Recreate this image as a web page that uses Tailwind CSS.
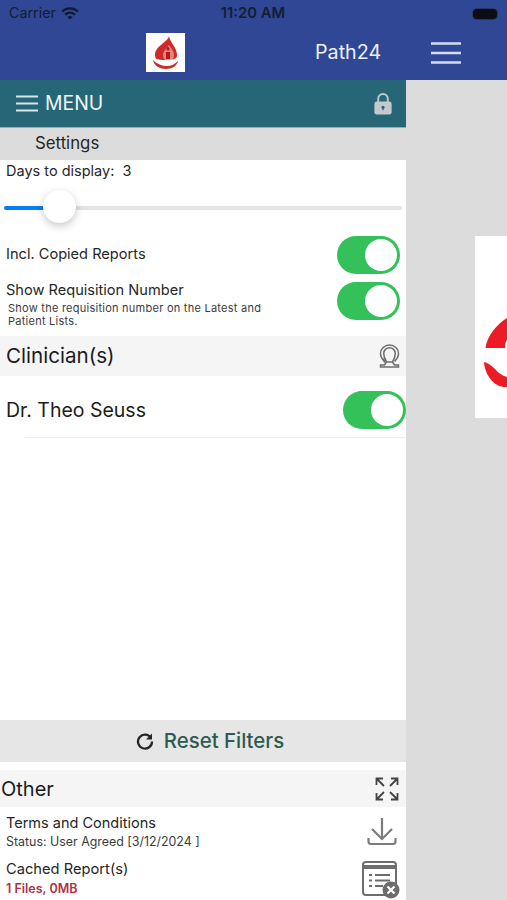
<!DOCTYPE html>
<html lang="en">
<head>
<meta charset="utf-8">
<script src="https://cdn.jsdelivr.net/npm/@tailwindcss/browser@4"></script>
<title>Path24</title>
</head>
<body class="m-0">
<div class="w-[507px] h-[900px] overflow-hidden flex flex-col bg-[#dcdcdc] font-['Inter','Liberation_Sans',sans-serif] text-[#262626]">
  <!-- top bar -->
  <header class="h-[80px] shrink-0 bg-[#2f4795] flex flex-col">
    <div class="h-[27px] shrink-0 grid grid-cols-3 items-center pl-[9px] pr-[10px] text-[#141d33]">
      <div class="flex items-center gap-[5px] text-[14.3px] leading-none">
        <span>Carrier</span>
        <svg width="18" height="13" viewBox="0 0 18 13" fill="none" stroke="#111a30" stroke-width="2.2"><path d="M1 4.500C5.800.4 12.200.4 17 4.500"/><path d="M4 7.600c3-2.500 7-2.500 10 0"/><path d="M9 12.600 6.400 10c1.500-1.200 3.700-1.200 5.200 0z" fill="#111a30" stroke="none"/></svg>
      </div>
      <div class="text-center text-[14.8px] font-semibold leading-none whitespace-nowrap">11:20 AM</div>
      <div class="flex justify-end items-center">
        <div class="w-[24px] h-[10px] rounded-[4px] bg-[#0b0d16] ring-1 ring-[#26376e]"></div>
      </div>
    </div>
    <div class="flex-1 flex items-center pb-[2px]">
      <div class="ml-[146px] w-[39px] h-[39px] bg-white flex items-center justify-center">
        <svg width="33" height="37" viewBox="0 0 33 37">
          <path d="M20 2C19 8 6 12 6 21c0 6 5 9 11 9s11-3 11-9C28 13 21 9 20 2z" fill="#cf2a27"/>
          <path d="M20 11c-2 3-6 6-6 10 0 2 1 4 2 5h7c1-1 2-3 2-5 0-4-3-7-5-10z" fill="#e9837b"/>
          <path d="M19 13c1 0 1.500 1 1.500 2s-.5 1.500-1.500 1.500-1.500-.5-1.500-1.500.5-2 1.500-2zM17 18h4v7h-4z" fill="#a81f1c"/>
          <path d="M3 23c4 2 7 3 11 3h6c3 0 6-1 10-4-2 6-6 8-10 8h-7c-4 0-8-2-10-7z" fill="#fff"/>
          <path d="M4 26c1 6 7 9 13 9 6 0 11-3 12-8-3 3-7 5-11 5-5 0-10-2-14-6z" fill="#c9302a"/>
        </svg>
      </div>
      <span class="ml-[130px] text-[19.700px] text-[#eef1fa]">Path24</span>
      <svg class="ml-[50px]" width="30" height="22" viewBox="0 0 30 22" stroke="#d5dcf0" stroke-width="2.600"><path d="M0 1.500h30M0 11h30M0 20.500h30"/></svg>
    </div>
  </header>

  <div class="flex-1 flex min-h-0">
    <!-- sidebar -->
    <aside class="w-[406px] shrink-0 flex flex-col bg-white">
      <div class="h-[48px] shrink-0 bg-[#266676] border-b border-[#8fb0b8] flex items-center pl-[16px] pr-[14px] text-[#eef6f7]">
        <svg width="22" height="17" viewBox="0 0 22 17" stroke="#d6e6e9" stroke-width="1.800"><path d="M0 1.500h22M0 8.500h22M0 15.500h22"/></svg>
        <span class="ml-[7px] text-[19.400px] flex-1">MENU</span>
        <svg width="18" height="23" viewBox="0 0 18 24"><path d="M4 11V7a5 5 0 0 1 10 0v4" fill="none" stroke="#c3c9cc" stroke-width="2"/><rect y="10" width="18" height="13.500" rx="2.500" fill="#c3c9cc"/><circle cx="9" cy="16" r="1.600" fill="#266676"/><path d="M8.300 16h1.400v3H8.300z" fill="#266676"/></svg>
      </div>
      <div class="h-[32px] shrink-0 bg-[#dcdcdc] pl-[35px] flex items-center text-[16.800px]">Settings</div>

      <div class="h-[22px] shrink-0 pl-[6px] flex items-center text-[14.500px] whitespace-pre">Days to display:  3</div>
      <div class="h-[52px] shrink-0 relative flex items-center px-[4px]">
        <div class="w-full h-[4px] rounded-full bg-[#e3e3e3]"></div>
        <div class="absolute left-[4px] top-[24px] w-[40px] h-[4px] rounded-l-full bg-[#0a7cf5]"></div>
        <div class="absolute left-[43px] top-[8px] w-[33px] h-[33px] rounded-full bg-white shadow-[0_3px_8px_rgba(0,0,0,0.22)]"></div>
      </div>

      <div class="h-[46px] shrink-0 flex justify-between pl-[6px] pr-[6px] text-[14.600px]">
        <span class="mt-[10px] leading-[20px]">Incl. Copied Reports</span>
        <div class="mt-[2px] w-[63px] h-[38px] rounded-full bg-[#34c159] p-[3px] flex justify-end"><div class="w-[32px] h-[32px] rounded-full bg-white"></div></div>
      </div>

      <div class="h-[56px] shrink-0 flex justify-between pl-[6px] pr-[6px]">
        <div>
          <div class="text-[14.600px] leading-[20px]">Show Requisition Number</div>
          <div class="ml-[2px] mt-[2px] w-[262px] text-[11px] leading-[13px] tracking-[0.25px] text-[#3b3b3b]">Show the requisition number on the Latest and Patient Lists.</div>
        </div>
        <div class="mt-[2px] w-[63px] h-[38px] rounded-full bg-[#34c159] p-[3px] flex justify-end"><div class="w-[32px] h-[32px] rounded-full bg-white"></div></div>
      </div>

      <div class="h-[40px] shrink-0 bg-[#f5f5f5] flex items-center justify-between pl-[6px] pr-[6px] text-[20.600px] text-[#1c1c1c]">
        <span>Clinician(s)</span>
        <svg width="21" height="24" viewBox="0 0 21 24" fill="none" stroke="#6e6e6e" stroke-width="1.500"><path d="M5.500 17.500C3 15 1.500 12.500 1.500 9.500a9 8.500 0 0 1 18 0c0 3-1.500 5.500-4 8"/><path d="M7.500 18C6 15.500 4.700 12.500 4.700 9.500a5.800 5.800 0 0 1 11.600 0c0 3-1.300 6-2.800 8.500"/><path d="M1.500 21h4l2-3h6l2 3h4v2h-18z"/><path d="M3.500 14.500l2 3 1-3"/></svg>
      </div>

      <div class="h-[62px] shrink-0 relative flex justify-between pl-[6px] text-[19.500px] text-[#1c1c1c]">
        <span class="mt-[22px] leading-[24px]">Dr. Theo Seuss</span>
        <div class="mt-[15px] w-[63px] h-[38px] rounded-full bg-[#34c159] p-[3px] flex justify-end"><div class="w-[32px] h-[32px] rounded-full bg-white"></div></div>
        <div class="absolute left-[25px] right-0 bottom-0 h-px bg-[#efefef]"></div>
      </div>

      <div class="flex-1"></div>

      <div class="h-[42px] shrink-0 bg-[#e6e6e6] flex items-center justify-center gap-[10px] pl-[14px]">
        <svg width="18" height="18" viewBox="0 0 18 18" fill="none" stroke="#262626" stroke-width="2.300"><path d="M15 6A7 7 0 1 0 16 9.500"/><path d="M16 1.500v6h-6z" fill="#262626" stroke="none"/></svg>
        <span class="text-[20.400px] font-medium text-[#2f5a50]">Reset Filters</span>
      </div>
      <div class="h-[8px] shrink-0"></div>
      <div class="h-[37px] shrink-0 bg-[#f5f5f5] flex items-center justify-between pl-[1px] pr-[7px] text-[20px] text-[#1c1c1c]">
        <span>Other</span>
        <svg width="24" height="24" viewBox="0 0 24 24" fill="none" stroke="#444" stroke-width="1.800"><path d="M1.500 8V1.500H8M1.500 1.500l7.500 7.500M16 1.500h6.500V8M22.500 1.500 15 9M1.500 16v6.500H8M1.500 22.500 9 15M22.500 16v6.500H16M22.500 22.500 15 15"/></svg>
      </div>
      <div class="h-[47px] shrink-0 flex justify-between pl-[6px] pr-[9px] pt-[6px]">
        <div>
          <div class="text-[14.500px] leading-[19px]">Terms and Conditions</div>
          <div class="text-[12.400px] leading-[15px] mt-[2px] text-[#3b3b3b]">Status: User Agreed [3/12/2024 ]</div>
        </div>
        <svg class="mt-[5px]" width="30" height="28" viewBox="0 0 30 28" fill="none" stroke="#7c7c7c" stroke-width="2.200"><path d="M15 0v20M5 11l10 10 10-10"/><path d="M1.500 20v3.500c0 1.500 1 2.500 2.500 2.500h22c1.500 0 2.500-1 2.500-2.500V20"/></svg>
      </div>
      <div class="flex-none h-[46px] flex justify-between pl-[6px] pr-[6px] pt-[6px]">
        <div>
          <div class="text-[14.700px] leading-[19px]">Cached Report(s)</div>
          <div class="text-[12.500px] leading-[15px] mt-[2px] font-semibold text-[#b0303f]">1 Files, 0MB</div>
        </div>
        <svg class="mt-[1px]" width="38" height="38" viewBox="0 0 38 38" fill="none" stroke="#6d6d6d" stroke-width="2"><rect x="1" y="1" width="33" height="33" rx="3"/><path d="M1 6h33" stroke-width="4"/><path d="M7 14h3M13 14h15M7 19.500h3M13 19.500h15M7 25h3M13 25h8"/><circle cx="29" cy="29" r="8.500" fill="#6d6d6d" stroke="none"/><path d="M25.500 25.500l7 7M32.500 25.500l-7 7" stroke="#fff" stroke-width="2.200"/></svg>
      </div>
    </aside>

    <!-- peek of the content behind the menu -->
    <main class="flex-1 min-w-0 pl-[69px] pt-[156px]">
      <svg class="block" width="32" height="182" viewBox="0 0 32 182"><rect width="32" height="182" fill="#fff"/><path d="M32 82C22 88 12 100 10.500 112H30C30 107 31 105 32 104z" fill="#ec1c24"/><path d="M9 126C14 127 19 132 24 137C27 139 29 140 32 141V151C20 152 10 140 9 126z" fill="#ec1c24"/></svg>
    </main>
  </div>
</div>
</body>
</html>
